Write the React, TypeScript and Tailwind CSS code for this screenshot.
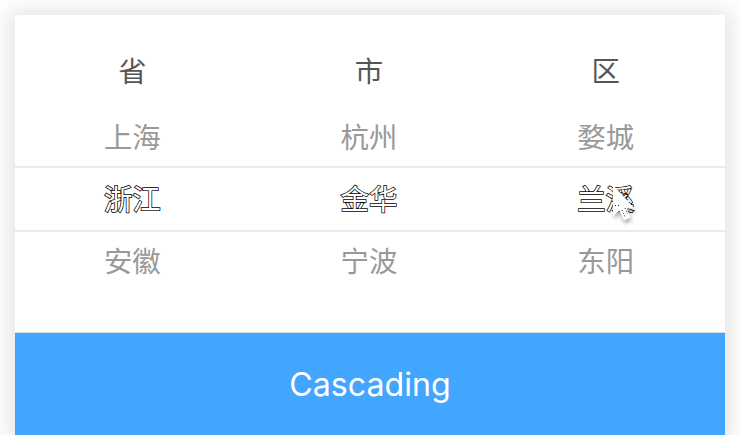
const columns = [
  { title: "省", previous: "上海", current: "浙江", next: "安徽" },
  { title: "市", previous: "杭州", current: "金华", next: "宁波" },
  { title: "区", previous: "婺城", current: "兰溪", next: "东阳" },
];

function Pointer() {
  return (
    <svg
      className="absolute left-[612px] top-[185px] drop-shadow-[1px_3px_2px_rgba(0,0,0,0.35)]"
      width="24"
      height="38"
      viewBox="0 0 24 38"
      aria-hidden="true"
    >
      <path d="M1 0V31L7.5 25.5L12 35.5L18.5 32.5L14.5 23.5H22.5Z" fill="#fff" />
      <path d="M3 20.5H7M10 25L13 31.5M13 23L15.5 29" fill="none" stroke="#222" strokeWidth="1" strokeDasharray="1 2" />
    </svg>
  );
}

export default function App() {
  return (
    <div className="h-[446px] w-[740px] bg-white font-['Noto_Sans_CJK_SC',sans-serif] antialiased">
      <div className="relative h-[435px] overflow-hidden px-[15px] pt-[15px]">
        <div className="h-[420px] bg-white shadow-[0_2px_20px_6px_rgba(0,0,0,0.11)]">
          <div className="flex h-[318px] flex-col border-b border-[#d8dde2] text-center text-[28.4px] text-[#999]">
            <div className="-ml-px grid h-[90px] grid-cols-3 pr-px pt-[24px] leading-[62px] text-[#555]">
              {columns.map((c) => <div key={c.title}>{c.title}</div>)}
            </div>
            <div className="-ml-px grid h-[61px] grid-cols-3 pr-px leading-[62px]">
              {columns.map((c) => <div key={c.title}>{c.previous}</div>)}
            </div>
            <div className="h-[66px] border-y-2 border-[#ebebeb]">
              <div className="-ml-px grid grid-cols-3 pr-px leading-[60px] text-white [-webkit-text-stroke:1.5px_#000] [paint-order:stroke_fill]">
                {columns.map((c) => <div key={c.title}>{c.current}</div>)}
              </div>
            </div>
            <div className="-ml-px grid grid-cols-3 pr-px leading-[56px]">
              {columns.map((c) => <div key={c.title}>{c.next}</div>)}
            </div>
          </div>
          <button className="flex h-[102px] w-full items-center justify-center bg-[#42a5ff] pt-[2px] font-['Inter',sans-serif] text-[32.2px] text-white">
            Cascading
          </button>
        </div>
        <Pointer />
      </div>
    </div>
  );
}
